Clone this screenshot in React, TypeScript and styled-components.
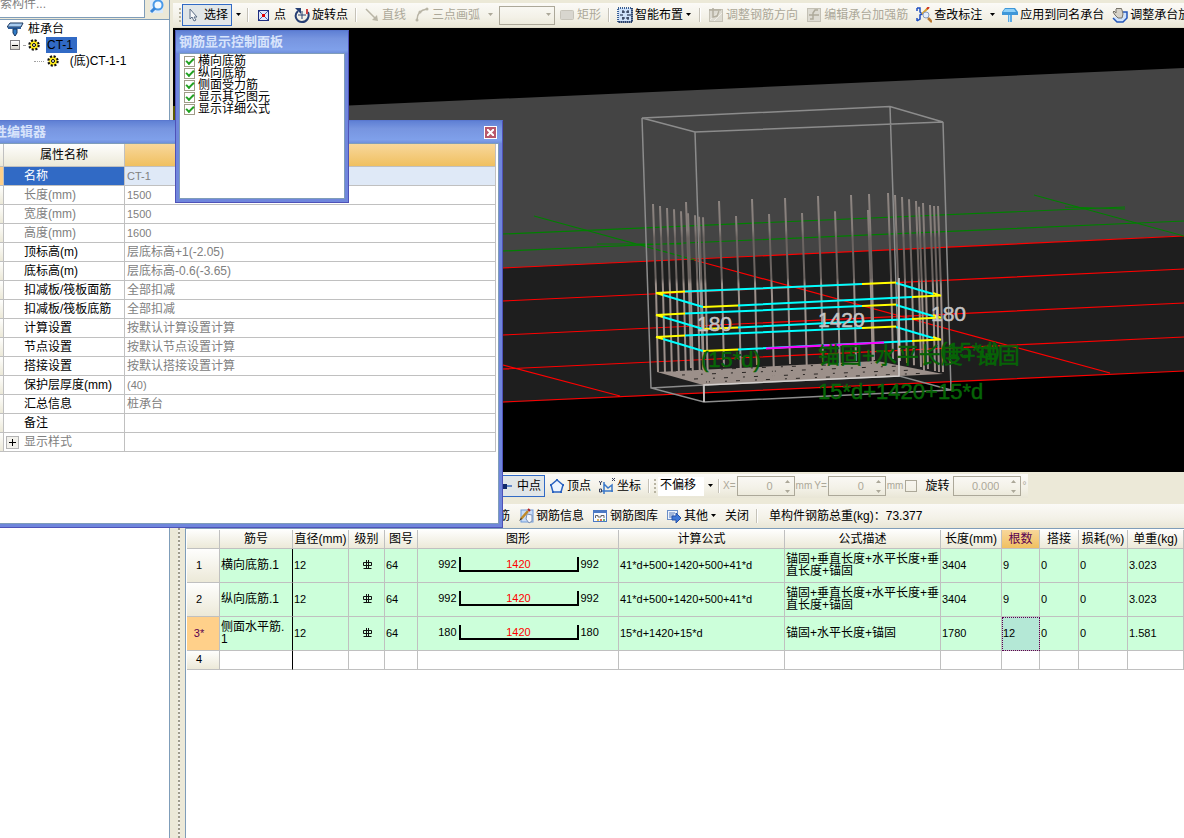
import React from "react";
import styled, { createGlobalStyle, css } from "styled-components";

const SANS = `"Liberation Sans", "Noto Sans CJK SC", sans-serif`;

const GlobalStyle = createGlobalStyle`
  * { box-sizing: border-box; }
  html, body { margin: 0; padding: 0; }
  body { font: 12px/14px ${SANS}; color: #000; background: #ece9d8; }
  button, input, select { font: inherit; color: inherit; margin: 0; padding: 0; border: 0; background: none; border-radius: 0; }
`;

/* ---------- page frame ---------- */

const Page = styled.div`
  position: relative;
  display: flex;
  min-height: 100vh;
  overflow: hidden;
`;

const LeftPane = styled.aside`
  flex: none;
  width: 170px;
  display: flex;
  flex-direction: column;
  border-right: 1px solid #7f9db9;
`;

const Splitter = styled.div`
  flex: none;
  width: 3px;
  background: #ece9d8;
`;

const Main = styled.main`
  flex: 1;
  min-width: 0;
  display: flex;
  flex-direction: column;
`;

/* ---------- left pane ---------- */

const SearchBar = styled.div`
  display: flex;
  height: 20px;
  border-bottom: 1px solid #7f9db9;
  overflow: hidden;
`;

const SearchInput = styled.input`
  width: 145px;
  height: 18px;
  padding-bottom: 10px;
  background: #fff;
  border: 1px solid #7f9db9;
  border-width: 0 1px 1px 0;
  &::placeholder { color: #808080; opacity: 1; }
`;

const SearchButton = styled.button`
  flex: 1;
  display: flex;
  align-items: flex-start;
  justify-content: center;
`;

const Tree = styled.ul`
  flex: 1;
  margin: 0;
  padding: 1px 0 0;
  background: #fff;
  list-style: none;
`;

const TreeRow = styled.li<{ $indent: number }>`
  display: flex;
  align-items: center;
  height: 16px;
  gap: 3px;
  padding-left: ${(p) => p.$indent}px;
`;

const TreeLabel = styled.span<{ $selected?: boolean }>`
  padding: 1px 4px 1px 1px;
  line-height: 14px;
  white-space: nowrap;
  ${(p) => p.$selected && css`
    margin-left: 3px;
    background: #316ac5;
  `}
`;

const Twisty = styled.button`
  width: 10px;
  height: 10px;
  display: flex;
  align-items: center;
  justify-content: center;
  border: 1px solid #848284;
  background: linear-gradient(#fff, #d6d3ca);
`;

const Dots = styled.span<{ $w: number }>`
  width: ${(p) => p.$w}px;
  border-top: 1px dotted #a0a0a0;
`;

/* ---------- toolbars ---------- */

const Toolbar = styled.div<{ $start: number; $wide?: boolean }>`
  display: flex;
  align-items: center;
  align-self: ${(p) => (p.$wide ? "stretch" : "auto")};
  height: 24px;
  padding-left: ${(p) => p.$start}px;
  background: linear-gradient(#fbfaf7, #f3f1e7 60%, #e9e6d6);
  overflow: hidden;
  white-space: nowrap;
`;

const TopBar = styled.div`
  padding-top: 3px;
  border-bottom: 1px solid #dedac8;
`;

const MidBars = styled.div`
  display: flex;
  flex-direction: column;
  gap: 6px;
  padding-top: 2px;
  align-items: flex-start;
  background: #ece9d8;
`;

const ToolButton = styled.button<{ $on?: boolean; $off?: boolean }>`
  flex: none;
  display: flex;
  align-items: center;
  gap: 2px;
  height: 22px;
  padding: 0 3px;
  border: 1px solid ${(p) => (p.$on ? "#316ac5" : "transparent")};
  background: ${(p) => (p.$on ? "#e1e6e8" : "transparent")};
  color: ${(p) => (p.$off ? "#aca899" : "#000")};
`;

const CaretButton = styled.button`
  flex: none;
  width: 12px;
  height: 22px;
  display: flex;
  align-items: center;
  justify-content: center;
`;

const Separator = styled.span`
  flex: none;
  width: 2px;
  height: 14px;
  margin: 0 3px;
  background: #c5c2b8;
  border-right: 1px solid #fff;
`;

const Grip = styled.span`
  flex: none;
  width: 2px;
  height: 15px;
  margin: 0 1px;
  background: repeating-linear-gradient(#b8b4a2 0 2px, transparent 2px 4px);
`;

const FlatSelect = styled.select<{ $white?: boolean }>`
  appearance: none;
  flex: 1;
  min-width: 0;
  height: 100%;
  padding: 0 2px 2px;
  background: ${(p) => (p.$white ? "#fff" : "transparent")};
`;

const SelectBox = styled.label<{ $w: number; $framed?: boolean }>`
  flex: none;
  display: flex;
  align-items: center;
  width: ${(p) => p.$w}px;
  height: 19px;
  margin-left: ${(p) => (p.$framed ? 3 : 1)}px;
  padding-right: ${(p) => (p.$framed ? 2 : 1)}px;
  gap: ${(p) => (p.$framed ? 0 : 3)}px;
  border: ${(p) => (p.$framed ? "1px solid #aca899" : "0")};
`;

const FieldGroup = styled.label`
  flex: none;
  display: flex;
  align-items: center;
  gap: 1px;
  padding-right: 2px;
  font-size: 10px;
  color: #aca899;
`;

const SpinBox = styled.span<{ $w: number }>`
  display: flex;
  align-items: center;
  width: ${(p) => p.$w}px;
  height: 20px;
  padding-right: 4px;
  border: 1px solid #aca899;
`;

const SpinInput = styled.input`
  flex: 1;
  min-width: 0;
  padding-right: 12px;
  font-size: 11px;
  text-align: right;
`;

const CheckGroup = styled.label`
  flex: none;
  display: flex;
  align-items: center;
  gap: 8px;
  padding-right: 4px;
`;

const PlainCheck = styled.input`
  appearance: none;
  width: 12px;
  height: 12px;
  border: 1px solid #aca899;
`;

const TotalWeight = styled.span`
  padding: 0 8px;
`;

/* ---------- 3D view ---------- */

const Viewport = styled.div`
  height: 444px;
  background: #000;
  overflow: hidden;
  svg { display: block; width: 100%; height: 100%; }
`;

/* ---------- rebar table ---------- */

const Bottom = styled.div`
  flex: 1;
  display: flex;
`;

const GripPane = styled.div`
  flex: none;
  width: 12px;
  padding-left: 5px;
  background: #ece9d8;
`;

const GripDots = styled.div`
  width: 2px;
  height: 100%;
  background: repeating-linear-gradient(#9d9a8c 0 2px, #f4f2ea 2px 4px);
`;

const SheetPane = styled.section`
  flex: 1;
  min-width: 0;
  padding: 1px 0 0 1px;
  background: #fff;
  border: 1px solid #7f9db9;
  border-width: 1px 0 0 1px;
`;

const Sheet = styled.table`
  width: 100%;
  table-layout: fixed;
  border-collapse: separate;
  border-spacing: 0;
`;

const headFace = css`background: linear-gradient(#fefefd, #ece9d8);`;

const SheetHead = styled.th<{ $hot?: boolean }>`
  height: 19px;
  padding: 0;
  font-weight: 400;
  white-space: nowrap;
  overflow: hidden;
  border-right: 1px solid #c0c0c0;
  border-bottom: 1px solid #c0c0c0;
  ${headFace}
  ${(p) => p.$hot && css`background: linear-gradient(#f8d79b, #f0c060); color: #5a0050;`}
`;

const RowHead = styled.th<{ $hot?: boolean }>`
  padding: 0 8px 2px 0;
  font-size: 11px;
  font-weight: 400;
  border-right: 1px solid #c0c0c0;
  border-bottom: 1px solid #c0c0c0;
  ${headFace}
  ${(p) => p.$hot && css`background: #ffd08a; color: #5a0050;`}
`;

const Cell = styled.td<{ $fill?: boolean; $num?: boolean; $bar?: boolean; $active?: boolean }>`
  height: ${(p) => (p.$fill ? 34 : 19)}px;
  padding: 0 0 2px 1px;
  line-height: 12px;
  white-space: nowrap;
  overflow: hidden;
  font-size: ${(p) => (p.$num ? 11 : 12)}px;
  background: ${(p) => (p.$active ? "#b4e8d6" : p.$fill ? "#ccffda" : "#fff")};
  border-right: 1px solid ${(p) => (p.$bar ? "#000" : "#c0c0c0")};
  border-bottom: 1px solid #c0c0c0;
  ${(p) => p.$active && css`outline: 1px dotted #5a0050; outline-offset: -1px;`}
`;

const ShapeRow = styled.div`
  display: flex;
  justify-content: center;
  gap: 2px;
  font-size: 11px;
  line-height: 15px;
`;

const Bracket = styled.span`
  width: 120px;
  height: 15px;
  border: solid #000;
  border-width: 0 2px 2px;
  line-height: 14px;
  text-align: center;
  color: #f00;
`;

const CenterBox = styled.div`
  display: flex;
  justify-content: center;
`;

/* ---------- floating windows ---------- */

const FloatWindow = styled.section<{ $x: number; $y: number; $w: number; $h: number }>`
  position: absolute;
  left: ${(p) => p.$x}px;
  top: ${(p) => p.$y}px;
  width: ${(p) => p.$w}px;
  height: ${(p) => p.$h}px;
  display: flex;
  flex-direction: column;
  padding: 0 3px 3px;
  background: #6f86dc;
  border: 1px solid #4f52b8;
  border-top-color: #5a78cf;
`;

const TitleBar = styled.header`
  flex: none;
  display: flex;
  align-items: center;
  justify-content: space-between;
  height: 22px;
  margin: 0 -3px;
  padding: 0 5px 0 3px;
  background: linear-gradient(#5f80d4, #7795e0 35%, #7fa0ea 85%, #6f8fdc);
  color: #d8e4fb;
  font-size: 13px;
  font-weight: 700;
`;

const CloseButton = styled.button`
  width: 13px;
  height: 13px;
  display: flex;
  align-items: center;
  justify-content: center;
  background: #b9586b;
  border: 1px solid #fff;
`;

const WindowBody = styled.div`
  flex: 1;
  background: #fff;
  border: 1px solid #7f9db9;
  overflow: hidden;
`;

const PropTable = styled.table`
  width: 100%;
  table-layout: fixed;
  border-spacing: 0;
  border-right: 2px solid #fff;
`;

const PropHead = styled.th<{ $hot?: boolean }>`
  height: 23px;
  padding: 0;
  font-weight: 400;
  border-right: 1px solid #c0c0c0;
  border-bottom: 1px solid #c0c0c0;
  ${headFace}
  ${(p) => p.$hot && css`background: linear-gradient(#f8d79b, #f0c060);`}
`;

const PropGutter = styled.td<{ $hot?: boolean }>`
  padding: 0;
  border-right: 1px solid #c0c0c0;
  border-bottom: 1px solid #c0c0c0;
  ${headFace}
  ${(p) => p.$hot && css`background: #ffd08a;`}
`;

const PropName = styled.th<{ $dim?: boolean; $selected?: boolean }>`
  height: 19px;
  padding: 0;
  text-align: left;
  font-weight: 400;
  white-space: nowrap;
  color: ${(p) => (p.$selected ? "#fff" : p.$dim ? "#808080" : "#000")};
  background: ${(p) => (p.$selected ? "#316ac5" : "#fff")};
  border-right: 1px solid #c0c0c0;
  border-bottom: 1px solid #c0c0c0;
`;

const NameInner = styled.div`
  display: flex;
  align-items: center;
  height: 18px;
`;

const Expander = styled.span`
  flex: none;
  width: 20px;
  padding-left: 2px;
`;

const ExpandButton = styled.button`
  display: flex;
  align-items: center;
  justify-content: center;
  width: 13px;
  height: 13px;
  border: 1px solid #b4b4b4;
  background: #f2f1ec;
`;

const PropValue = styled.td<{ $selected?: boolean; $num?: boolean }>`
  padding: 0 0 1px 2px;
  color: #808080;
  font-size: ${(p) => (p.$num ? 11 : 12)}px;
  background: ${(p) => (p.$selected ? "#dfe9f7" : "#fff")};
  border-right: 1px solid #c0c0c0;
  border-bottom: 1px solid #c0c0c0;
`;

const CheckList = styled.div`
  display: flex;
  flex-direction: column;
  padding: 1px 0 0 4px;
`;

const CheckRow = styled.label`
  display: flex;
  align-items: center;
  gap: 3px;
  height: 12px;
  line-height: 12px;
`;

const GreenCheck = styled.input`
  appearance: none;
  display: flex;
  align-items: center;
  justify-content: center;
  width: 11px;
  height: 11px;
  border: 1px solid #a09c88;
  background: #fff;
  &:checked::after {
    content: "";
    width: 6px;
    height: 3px;
    border: solid #21a121;
    border-width: 0 0 2px 2px;
    transform: rotate(-45deg);
    margin-bottom: 2px;
  }
`;

/* ---------- icons ---------- */

const Ico = ({ children }: { children?: React.ReactNode }) => (
  <svg width="16" height="16" viewBox="0 0 16 16" fill="none" aria-hidden="true">{children}</svg>
);

const Caret = ({ c = "#000" }: { c?: string }) => (
  <svg width="7" height="4" viewBox="0 0 7 4" aria-hidden="true"><path d="M1 0h5L3.500 3z" fill={c} /></svg>
);

const SpinArrows = () => (
  <svg width="5" height="15" viewBox="0 0 5 15" aria-hidden="true">
    <path d="M0 4h5L2.500 1zM0 11h5L2.500 14z" fill="#aca899" />
  </svg>
);

const CursorIcon = () => <Ico><path d="M4 2v10l2-2 2 4 2-1-2-3h3z" fill="#f6f8fa" stroke="#5a6d85" /></Ico>;
const PointIcon = () => (
  <Ico>
    <rect x="2.500" y="3.500" width="10" height="10" fill="#dfe8fb" stroke="#1f2f80" strokeWidth="1" />
    <path d="M3 4l9 9M12 4l-9 9" stroke="#5566a8" />
    <rect x="6" y="7" width="3" height="3" fill="#e00000" />
  </Ico>
);
const RotateIcon = () => (
  <Ico>
    <path d="M4 4C-1 9 3 15 8 15s8-5 6-10" stroke="#263f74" strokeWidth="2" />
    <path d="M1 1h6v6z" fill="#263f74" />
    <path d="M8 4v8M4 8h8" stroke="#26406f" />
    <path d="M13 2v5" stroke="#d04040" strokeWidth="2" />
  </Ico>
);
const LineIcon = () => <Ico><path d="M2 2l10 10" stroke="#b9b5a6" strokeWidth="1.500" /><path d="M14 14l-6-1 5-5z" fill="#b9b5a6" /></Ico>;
const ArcIcon = () => (
  <Ico>
    <path d="M3 13C3 7 6 3 13 2" stroke="#b9b5a6" strokeWidth="1.500" />
    <circle cx="3" cy="13" r="1.500" fill="#b9b5a6" /><circle cx="6" cy="5" r="1.500" fill="#b9b5a6" /><circle cx="13" cy="2" r="1.500" fill="#b9b5a6" />
  </Ico>
);
const RectIcon = () => <Ico><rect x="1.500" y="3.500" width="13" height="9" rx="1" fill="#d8d6cf" stroke="#c7c4ba" /></Ico>;
const SmartIcon = () => (
  <Ico>
    <rect x="1" y="1" width="14" height="14" fill="#cfe2fb" stroke="#3a5f94" strokeWidth="2" strokeDasharray="1 1" />
    <path d="M1 15h14M15 1v14" stroke="#16294f" />
    <path d="M6 3v3M5 5h3M11 3v3M9 5h3M3 8h3M10 8h4M6 10v3M5 11h3M11 10v3M9 11h3" stroke="#101c38" />
  </Ico>
);
const OffBoxIcon = () => (
  <Ico>
    <rect x="1.500" y="2.500" width="13" height="12" fill="#dddbd2" stroke="#c4c1b5" />
    <path d="M2 13L13 3M6 14l8-8" stroke="#f0eee6" />
    <path d="M1 3h12M5 1v9l4-1 2-5" stroke="#b3afa0" strokeWidth="1.500" />
  </Ico>
);
const OffEditIcon = () => (
  <Ico>
    <rect x="1.500" y="1.500" width="13" height="13" fill="#dddbd2" stroke="#c4c1b5" />
    <path d="M3 8h10M12 3H9L7 6v6H4" stroke="#aeaa9b" strokeWidth="1.500" />
  </Ico>
);
const InspectIcon = () => (
  <Ico>
    <path d="M1 1h3v4l2 2-2 1v4l-3 2M1 1v3M1 11v3" stroke="#1f4fc0" strokeWidth="1.500" />
    <path d="M12 1L6 7" stroke="#d8a030" strokeWidth="2" /><path d="M13 0l-2 2" stroke="#d03020" strokeWidth="2" />
    <circle cx="10" cy="8" r="3" fill="#e4eefc" stroke="#8a9cc0" />
    <path d="M12 11l4 4" stroke="#b87830" strokeWidth="2.500" />
  </Ico>
);
const PileIcon = () => (
  <Ico>
    <path d="M3 1h10l3 4v3H0V5z" fill="#3f97d8" /><path d="M3 2h9l2 3H1z" fill="#8fd0f8" />
    <path d="M6 8h4v7H6z" fill="#5aaae6" /><path d="M7 8h1v7H7z" fill="#b4e0fa" />
  </Ico>
);
const HandIcon = () => (
  <Ico>
    <path d="M11 5h4v6l-4 4H5l-4-4" fill="#cfe2fb" stroke="#2456b8" strokeWidth="1.500" />
    <path d="M3 8L1 5l1-1 2 2V2l1-1 1 1 1-1 1 1 1-1 1 2 1 4-1 4H6z" fill="#d6d2c8" stroke="#77736a" />
  </Ico>
);
const MidIcon = () => <Ico><path d="M0 8h13" stroke="#3d6cc0" strokeWidth="1.500" /><path d="M3 6h5v5H3z" fill="#10296b" /></Ico>;
const VertexIcon = () => (
  <Ico>
    <path d="M8 2l6 5-2 7H4L2 7z" fill="#eef5fe" stroke="#2a62c0" strokeWidth="1.500" />
    <path d="M7 1h2v2H7zM1 6h2v2H1zM13 6h2v2h-2zM3 13h2v2H3zM11 13h2v2h-2z" fill="#2a62c0" />
  </Ico>
);
const CoordIcon = () => (
  <Ico>
    <path d="M5 4v12M3 13h11M5 6l4 4 4-3v7" stroke="#3a78c8" strokeWidth="1.500" />
    <path d="M0 3l1.500 2L3 3M1.500 5v2M0.500 11h2v3h-2zM13 0l3 3M16 0l-3 3" stroke="#39415c" />
  </Ico>
);
const InfoIcon = () => (
  <Ico>
    <rect x="3" y="2" width="12" height="12" fill="#c8dcf8" stroke="#6f9ad8" />
    <path d="M9 6l5 1v6l-3 2-3-4z" fill="#f2f6fc" stroke="#7a8fb4" />
    <path d="M3 11l7-8" stroke="#c08a2a" strokeWidth="2.500" /><path d="M1 13l2-3 1 1z" fill="#222" /><path d="M10 1l2 2" stroke="#b02020" strokeWidth="2" />
  </Ico>
);
const LibraryIcon = () => (
  <Ico>
    <rect x="1.500" y="2.500" width="13" height="11" fill="#f7fafe" stroke="#4b79c4" /><path d="M1 2h14v3H1z" fill="#4b79c4" />
    <path d="M3.500 10V7.500H6V9h3V7.500h3V10" stroke="#666" />
    <path d="M5 12h2" stroke="#d8a020" strokeWidth="1.500" /><path d="M8 12h2" stroke="#d04020" strokeWidth="1.500" /><path d="M11 12h2" stroke="#40a040" strokeWidth="1.500" />
  </Ico>
);
const OtherIcon = () => (
  <Ico>
    <rect x="1.500" y="2.500" width="10" height="9" fill="#eef4fd" stroke="#6b8fc8" />
    <path d="M3 5h6M3 7h5M3 9h3" stroke="#5578b8" />
    <path d="M6 8h4V5l5 5-5 5v-3H6z" fill="#3f78d8" stroke="#2450a8" />
  </Ico>
);
const SearchIcon = () => (
  <svg width="16" height="14" viewBox="0 0 16 14" fill="none" aria-hidden="true">
    <path d="M1 0h13v13H1z" fill="#dcebfa" />
    <circle cx="9" cy="5" r="4.500" fill="#f4faff" stroke="#4a9ae8" strokeWidth="2" />
    <path d="M6 8l-4 4" stroke="#3a86d8" strokeWidth="3" />
  </svg>
);
const GearIcon = () => (
  <svg width="12" height="12" viewBox="0 0 12 12" aria-hidden="true">
    <circle cx="6" cy="6" r="4.500" fill="#ffe818" stroke="#111" strokeWidth="2.500" strokeDasharray="2 1.540" />
    <circle cx="6" cy="6" r="3.500" fill="#ffee20" />
    <circle cx="6" cy="6" r="1.500" fill="#fff" stroke="#000" />
  </svg>
);
const CapIcon = () => (
  <svg width="17" height="15" viewBox="0 0 17 15" aria-hidden="true">
    <path d="M3 1h13l-2 4H0z" fill="#a8ccf0" stroke="#18365f" /><path d="M1 5h13v2H1z" fill="#2b5c9a" />
    <path d="M6 7h4v4l-2 3-2-3z" fill="#2f7cc8" stroke="#18365f" />
  </svg>
);
const GradeMark = () => (
  <svg width="11" height="10" viewBox="0 0 11 10" fill="none" aria-label="HRB400" role="img">
    <path d="M3 2.500H1.500v3H9.500v-3H3M4.500 0v8M6.500 0v8M1.500 8.500h8" stroke="#111" />
  </svg>
);

/* ---------- scene ---------- */

const pts = (base: [number, number][]) => base.map(([x, y]) => [620 + x / 3, 180 + y / 3]);
const leftBars = pts([[99, 72], [120, 78], [141, 84], [162, 88], [183, 94], [204, 100], [225, 106], [237, 110], [249, 112]]);
const backBars = pts([[198, 66], [297, 63], [396, 57], [495, 54], [594, 48], [693, 45], [747, 42], [804, 39]]);
const frontBars = pts([[348, 108], [447, 102], [546, 99], [645, 94], [744, 90], [897, 80]]);
const rightBars = pts([[825, 45], [846, 51], [867, 58], [888, 63], [909, 69], [930, 75], [942, 78], [954, 78]]);

const Bars = ({ list, drop }: { list: number[][]; drop: number }) => (
  <>{list.map(([x, y]) => (
    <polyline key={x} points={`${x},${y} ${x + 3},${y + drop / 2} ${x + 5},${y + drop}`} />
  ))}</>
);

const Ring = ({ y, magenta }: { y: number; magenta?: boolean }) => (
  <g transform={`translate(0 ${y})`} strokeWidth="2">
    <path d="M663 295L703 307M738 305.500L912 297M685 291.500L862 284M896 283L933 294" stroke="#0ff" />
    <path d="M656 293L685 291.500M862 284L896 282.500M941 295.500L912 297M738 305.500L703 307M656 293L663 295M933 293L941 296" stroke="#ff0" />
    {magenta && <path d="M766 304.500L884 298.500" stroke="#f0f" />}
  </g>
);

const Scene = () => (
  <svg viewBox="173 28 1011 444" preserveAspectRatio="xMinYMin slice" fill="none" role="img" aria-label="CT-1">
    <defs>
      <linearGradient id="bar" gradientUnits="userSpaceOnUse" x1="0" y1="190" x2="0" y2="390">
        <stop offset="0" stopColor="#8f8783" /><stop offset="0.200" stopColor="#857d79" />
        <stop offset="0.240" stopColor="#6b6461" /><stop offset="0.440" stopColor="#6b6461" />
        <stop offset="0.470" stopColor="#9c908a" /><stop offset="1" stopColor="#9c908a" />
      </linearGradient>
    </defs>
    <path d="M173 113.500L1184 68v168L173 284z" fill="#444" />
    <path d="M173 106h2v20h-2z" fill="#5a5a00" />
    <path d="M173 284L1184 236V371L173 418z" fill="#1e1e1e" />
    <g stroke="#f00" strokeWidth="1.200">
      <path d="M503 268L1184 236M503 301L1184 269M503 335L1184 303M503 369L1184 337M503 402L1184 371M694 260L1110 373M503 365L620 396" />
    </g>
    <g stroke="#008000" strokeWidth="1.200">
      <path d="M503 234L1125 207M503 251L1184 221M534 216L695 260M597 244H682M1034 195L1184 236M1065 207L1125 209" />
    </g>
    <g stroke="#8c8c8c" strokeWidth="1.500">
      <path d="M642 118L890 106.500L943 122L695 132zM642 118L651 388L704 402L951 390L943 122M695 132L704 402M890 106.500L899 376L951 390M651 388L704 385L899 376" />
    </g>
    <path d="M657 372L877 361L943 374L703 385z" fill="#9c908a" />
    <path d="M672 371L880 363M682 375L900 366M694 379L915 370M706 382L930 373" stroke="#2a2624" strokeDasharray="4 15 2 9" />
    <g stroke="url(#bar)" strokeWidth="2">
      <Bars list={backBars} drop={166} />
      <Bars list={leftBars} drop={168} />
      <Bars list={rightBars} drop={166} />
      <Bars list={frontBars} drop={164} />
    </g>
    <Ring y={0} />
    <Ring y={22} />
    <Ring y={44} magenta />
    <path d="M704 402V385L899 376V278" stroke="#d4d0ce" strokeWidth="1.500" />
    <g fontFamily="Liberation Sans, Noto Sans CJK SC, sans-serif" fontSize="21" fill="#c4c4c4" stroke="#c4c4c4" strokeWidth="0.500">
      <text x="697" y="331">180</text>
      <text x="818" y="327">1420</text>
      <text x="931" y="321">180</text>
    </g>
    <g fontFamily="Liberation Sans, Noto Sans CJK SC, sans-serif" fontSize="22" fill="#066406" stroke="#066406" strokeWidth="0.500">
      <text x="701" y="367">(15*d)</text>
      <text x="818" y="363">锚固+水平长度+锚固</text>
      <text x="940" y="358">(15*d)</text>
      <text x="818" y="399">15*d+1420+15*d</text>
    </g>
  </svg>
);

/* ---------- data ---------- */

type Prop = { name: string; value: string; dim?: boolean; num?: boolean; selected?: boolean; expandable?: boolean };
const props: Prop[] = [
  { name: "名称", value: "CT-1", num: true, selected: true },
  { name: "长度(mm)", value: "1500", num: true, dim: true },
  { name: "宽度(mm)", value: "1500", num: true, dim: true },
  { name: "高度(mm)", value: "1600", num: true, dim: true },
  { name: "顶标高(m)", value: "层底标高+1(-2.05)" },
  { name: "底标高(m)", value: "层底标高-0.6(-3.65)" },
  { name: "扣减板/筏板面筋", value: "全部扣减" },
  { name: "扣减板/筏板底筋", value: "全部扣减" },
  { name: "计算设置", value: "按默认计算设置计算" },
  { name: "节点设置", value: "按默认节点设置计算" },
  { name: "搭接设置", value: "按默认搭接设置计算" },
  { name: "保护层厚度(mm)", value: "(40)", num: true },
  { name: "汇总信息", value: "桩承台" },
  { name: "备注", value: "" },
  { name: "显示样式", value: "", dim: true, expandable: true },
];

const columns = [
  { t: "", w: 33 }, { t: "筋号", w: 73 }, { t: "直径(mm)", w: 56 }, { t: "级别", w: 36 }, { t: "图号", w: 33 },
  { t: "图形", w: 201 }, { t: "计算公式", w: 166 }, { t: "公式描述", w: 156 }, { t: "长度(mm)", w: 61 },
  { t: "根数", w: 38 }, { t: "搭接", w: 39 }, { t: "损耗(%)", w: 49 }, { t: "单重(kg)" },
];

const bars = [
  { no: "1", name: ["横向底筋.1"], end: "992", formula: "41*d+500+1420+500+41*d", desc: ["锚固+垂直长度+水平长度+垂", "直长度+锚固"], len: "3404", n: "9", kg: "3.023" },
  { no: "2", name: ["纵向底筋.1"], end: "992", formula: "41*d+500+1420+500+41*d", desc: ["锚固+垂直长度+水平长度+垂", "直长度+锚固"], len: "3404", n: "9", kg: "3.023" },
  { no: "3*", name: ["侧面水平筋.", "1"], end: "180", formula: "15*d+1420+15*d", desc: ["锚固+水平长度+锚固"], len: "1780", n: "12", kg: "1.581", active: true },
];

const Lines = ({ items }: { items: string[] }) => (
  <>{items.map((s, i) => <React.Fragment key={s}>{i > 0 && <br />}{s}</React.Fragment>)}</>
);

const shown = ["横向底筋", "纵向底筋", "侧面受力筋", "显示其它图元", "显示详细公式"];

const SpinField = ({ label, unit, value, w }: { label?: string; unit: string; value: string; w: number }) => (
  <FieldGroup>
    {label}
    <SpinBox $w={w}><SpinInput defaultValue={value} disabled aria-label={label || "旋转"} /><SpinArrows /></SpinBox>
    {unit}
  </FieldGroup>
);

export default function App() {
  return (
    <>
      <GlobalStyle />
      <Page>
        <LeftPane>
          <SearchBar>
            <SearchInput placeholder="索构件..." aria-label="搜索构件" />
            <SearchButton aria-label="搜索"><SearchIcon /></SearchButton>
          </SearchBar>
          <Tree>
            <TreeRow $indent={7}><CapIcon /><TreeLabel>桩承台</TreeLabel></TreeRow>
            <TreeRow $indent={10}>
              <Twisty aria-label="折叠"><svg width="6" height="1"><path d="M0 0h6v1H0z" fill="#000" /></svg></Twisty>
              <Dots $w={2} />
              <GearIcon />
              <TreeLabel $selected>CT-1</TreeLabel>
            </TreeRow>
            <TreeRow $indent={34}><Dots $w={10} /><GearIcon /><TreeLabel>&nbsp;&nbsp;(底)CT-1-1</TreeLabel></TreeRow>
          </Tree>
        </LeftPane>
        <Splitter />
        <Main>
          <TopBar>
            <Toolbar $start={5}>
              <Grip />
              <ToolButton $on><CursorIcon />选择</ToolButton>
              <CaretButton aria-label="选择方式"><Caret /></CaretButton>
              <Separator />
              <ToolButton><PointIcon />点</ToolButton>
              <ToolButton><RotateIcon />旋转点</ToolButton>
              <Separator />
              <ToolButton $off><LineIcon />直线</ToolButton>
              <ToolButton $off><ArcIcon />三点画弧</ToolButton>
              <CaretButton aria-label="画弧方式"><Caret c="#aca899" /></CaretButton>
              <SelectBox $w={56} $framed><FlatSelect disabled aria-label="半径" /><Caret c="#aca899" /></SelectBox>
              <ToolButton $off><RectIcon />矩形</ToolButton>
              <Separator />
              <ToolButton><SmartIcon />智能布置<Caret /></ToolButton>
              <Separator />
              <ToolButton $off><OffBoxIcon />调整钢筋方向</ToolButton>
              <ToolButton $off><OffEditIcon />编辑承台加强筋</ToolButton>
              <ToolButton><InspectIcon />查改标注</ToolButton>
              <CaretButton aria-label="标注方式"><Caret /></CaretButton>
              <ToolButton><PileIcon />应用到同名承台</ToolButton>
              <ToolButton><HandIcon />调整承台放坡</ToolButton>
            </Toolbar>
          </TopBar>
          <Viewport><Scene /></Viewport>
          <MidBars>
            <Toolbar $start={322}>
              <ToolButton $on><MidIcon />中点</ToolButton>
              <ToolButton><VertexIcon />顶点</ToolButton>
              <ToolButton><CoordIcon />坐标</ToolButton>
              <Separator />
              <Grip />
              <SelectBox $w={57}>
                <FlatSelect $white aria-label="偏移"><option>不偏移</option></FlatSelect><Caret />
              </SelectBox>
              <Separator />
              <SpinField label="X=" unit="mm" value="0" w={58} />
              <SpinField label="Y=" unit="mm" value="0" w={58} />
              <CheckGroup><PlainCheck type="checkbox" />旋转</CheckGroup>
              <SpinField unit="°" value="0.000" w={68} />
            </Toolbar>
            <Toolbar $start={321} $wide>
              <ToolButton>筋</ToolButton>
              <ToolButton><InfoIcon />钢筋信息</ToolButton>
              <ToolButton><LibraryIcon />钢筋图库</ToolButton>
              <ToolButton><OtherIcon />其他<Caret /></ToolButton>
              <ToolButton>关闭</ToolButton>
              <Separator />
              <TotalWeight>单构件钢筋总重(kg)：73.377</TotalWeight>
            </Toolbar>
          </MidBars>
          <Bottom>
            <GripPane><GripDots /></GripPane>
            <SheetPane>
              <Sheet>
                <colgroup>{columns.map((c, i) => <col key={i} width={c.w} />)}</colgroup>
                <thead>
                  <tr>{columns.map((c, i) => <SheetHead key={i} $hot={c.t === "根数"}>{c.t}</SheetHead>)}</tr>
                </thead>
                <tbody>
                  {bars.map((b) => (
                    <tr key={b.no}>
                      <RowHead $hot={b.active}>{b.no}</RowHead>
                      <Cell $fill $bar><Lines items={b.name} /></Cell>
                      <Cell $fill $num>12</Cell>
                      <Cell $fill><CenterBox><GradeMark /></CenterBox></Cell>
                      <Cell $fill $num>64</Cell>
                      <Cell $fill><ShapeRow>{b.end}<Bracket>1420</Bracket>{b.end}</ShapeRow></Cell>
                      <Cell $fill $num>{b.formula}</Cell>
                      <Cell $fill><Lines items={b.desc} /></Cell>
                      <Cell $fill $num>{b.len}</Cell>
                      <Cell $fill $num $active={b.active}>{b.n}</Cell>
                      <Cell $fill $num>0</Cell>
                      <Cell $fill $num>0</Cell>
                      <Cell $fill $num>{b.kg}</Cell>
                    </tr>
                  ))}
                  <tr>
                    <RowHead>4</RowHead>
                    {columns.slice(1).map((c) => <Cell key={c.t} $bar={c.t === "筋号"} />)}
                  </tr>
                </tbody>
              </Sheet>
            </SheetPane>
          </Bottom>
        </Main>

        <FloatWindow $x={-23} $y={120} $w={526} $h={408} aria-label="属性编辑器">
          <TitleBar>属性编辑器<CloseButton aria-label="关闭">
            <svg width="7" height="7" viewBox="0 0 7 7"><path d="M0 0l7 7M7 0L0 7" stroke="#fff" strokeWidth="2" /></svg>
          </CloseButton></TitleBar>
          <WindowBody>
            <PropTable>
              <colgroup><col width={22} /><col width={121} /><col /></colgroup>
              <thead><tr><PropHead /><PropHead>属性名称</PropHead><PropHead $hot /></tr></thead>
              <tbody>
                {props.map((p) => (
                  <tr key={p.name}>
                    <PropGutter $hot={p.selected} />
                    <PropName $dim={p.dim} $selected={p.selected}>
                      <NameInner>
                        <Expander>{p.expandable && (
                          <ExpandButton aria-label="展开">
                            <svg width="7" height="7" viewBox="0 0 7 7"><path d="M0 3.500h7M3.500 0v7" stroke="#000" /></svg>
                          </ExpandButton>
                        )}</Expander>
                        {p.name}
                      </NameInner>
                    </PropName>
                    <PropValue $selected={p.selected} $num={p.num}>{p.value}</PropValue>
                  </tr>
                ))}
              </tbody>
            </PropTable>
          </WindowBody>
        </FloatWindow>

        <FloatWindow $x={175} $y={30} $w={174} $h={173} aria-label="钢筋显示控制面板">
          <TitleBar>钢筋显示控制面板</TitleBar>
          <WindowBody>
            <CheckList>
              {shown.map((s) => (
                <CheckRow key={s}><GreenCheck type="checkbox" defaultChecked />{s}</CheckRow>
              ))}
            </CheckList>
          </WindowBody>
        </FloatWindow>
      </Page>
    </>
  );
}
